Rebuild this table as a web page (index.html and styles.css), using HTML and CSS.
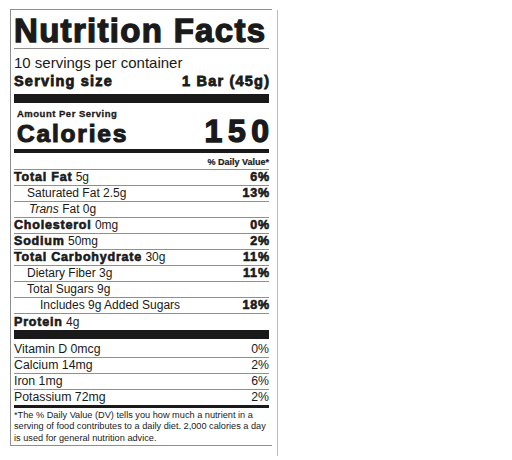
FILE: index.html
```html
<!DOCTYPE html>
<html lang="en">

<head>
  <meta charset="UTF-8">
  <meta name="viewport" content="width=device-width, initial-scale=1.0">
  <title>Nutrition Facts</title>
  <link rel="stylesheet" href="styles.css">
</head>

<body>
  <div class="sheet">
    <!-- Label -->
    <div class="label">
      <h1 class="title">Nutrition Facts</h1>
      <p class="servings">10 servings per container</p>
      <p class="serving-size"><span>Serving size</span><span class="end">1 Bar (45g)</span></p>
      <div class="bar"></div>

      <!-- Calories -->
      <p class="amount">Amount Per Serving</p>
      <div class="calories">
        <span class="cal-label">Calories</span>
        <span class="cal-value">150</span>
      </div>
      <div class="rule-medium"></div>
      <p class="dv-head">% Daily Value*</p>

      <!-- Nutrients -->
      <ul class="nutrients">
        <li><span><b>Total Fat</b> 5g</span><b class="end">6%</b></li>
        <li class="sub"><span>Saturated Fat 2.5g</span><b class="end">13%</b></li>
        <li class="sub trans"><span><i>Trans</i> Fat 0g</span></li>
        <li><span><b>Cholesterol</b> 0mg</span><b class="end">0%</b></li>
        <li><span><b>Sodium</b> 50mg</span><b class="end">2%</b></li>
        <li><span><b>Total Carbohydrate</b> 30g</span><b class="end">11%</b></li>
        <li class="sub"><span>Dietary Fiber 3g</span><b class="end">11%</b></li>
        <li class="sub"><span>Total Sugars 9g</span></li>
        <li class="sub-2"><span>Includes 9g Added Sugars</span><b class="end">18%</b></li>
        <li class="protein"><span><b>Protein</b> 4g</span></li>
      </ul>
      <div class="bar bar-flush"></div>

      <!-- Vitamins and minerals -->
      <ul class="vitamins">
        <li><span>Vitamin D 0mcg</span><span>0%</span></li>
        <li><span>Calcium 14mg</span><span>2%</span></li>
        <li><span>Iron 1mg</span><span>6%</span></li>
        <li><span>Potassium 72mg</span><span>2%</span></li>
      </ul>

      <p class="footnote">*The % Daily Value (DV) tells you how much a nutrient in a<br>serving of food contributes to a daily diet. 2,000 calories a day<br>is used for general nutrition advice.</p>
    </div>
    <div class="edge"></div>
  </div>
</body>

</html>
```

FILE: styles.css
```css
/* Base */
body {
  margin: 0;
  background: #fff;
  color: #1a1a1a;
  font-family: 'Liberation Sans', Arial, sans-serif;
}

.sheet {
  display: flex;
  align-items: flex-start;
}

/* Label box */
.label {
  width: 255px;
  margin: 9px 0 0 10px;
  padding: 0 3px 1px 3px;
  border: 1px solid #8f8f8f;
  border-right: none;
}

.edge {
  width: 1px;
  height: 446px;
  margin: 10px 0 0 5px;
  background: #d9a9d2;
}

.title {
  margin: 0;
  padding-top: 3px;
  font-size: 33px;
  line-height: 35px;
  font-weight: 700;
  letter-spacing: 1.3px;
  white-space: nowrap;
  -webkit-text-stroke: 1.3px #1a1a1a;
  border-bottom: 1px solid #8f8f8f;
}

.servings {
  margin: 0;
  padding-top: 5px;
  font-size: 15px;
  line-height: 18px;
}

.serving-size {
  margin: 0;
  display: flex;
  justify-content: space-between;
  font-size: 14.5px;
  line-height: 18px;
  font-weight: 700;
  letter-spacing: 1.2px;
  -webkit-text-stroke: 0.8px #1a1a1a;
}

.serving-size .end {
  margin-right: -1.2px;
}

.bar {
  height: 9px;
  margin-top: 4px;
  background: #1a1a1a;
}

.bar-flush {
  margin-top: 0;
}

/* Calories */
.amount {
  margin: 0;
  padding: 6px 0 0 3px;
  font-size: 9.5px;
  line-height: 10px;
  font-weight: 700;
  letter-spacing: 0.5px;
  -webkit-text-stroke: 0.3px #1a1a1a;
}

.calories {
  display: flex;
  justify-content: space-between;
  align-items: baseline;
  height: 30px;
  padding-left: 3px;
  font-weight: 700;
  line-height: 24px;
}

.cal-label {
  font-size: 24.5px;
  letter-spacing: 1.8px;
  -webkit-text-stroke: 1.1px #1a1a1a;
}

.cal-value {
  font-size: 32px;
  letter-spacing: 5.5px;
  margin-right: -5.5px;
  -webkit-text-stroke: 1.4px #1a1a1a;
}

.rule-medium {
  height: 4px;
  background: #1a1a1a;
}

.dv-head {
  margin: 0;
  padding-top: 3px;
  font-size: 9px;
  line-height: 13px;
  font-weight: 700;
  text-align: right;
  -webkit-text-stroke: 0.2px #1a1a1a;
  border-bottom: 1px solid #8f8f8f;
}

/* Nutrient rows */
.nutrients,
.vitamins {
  list-style: none;
  margin: 0;
  padding: 0;
}

.nutrients li,
.vitamins li {
  display: flex;
  justify-content: space-between;
  font-size: 12px;
  line-height: 15px;
  border-bottom: 1px solid #8f8f8f;
}

.nutrients b {
  font-size: 12.5px;
  letter-spacing: 0.8px;
  -webkit-text-stroke: 0.6px #1a1a1a;
}

.nutrients .end {
  margin-right: -0.8px;
}

.nutrients .sub {
  padding-left: 13px;
}

.nutrients .trans {
  padding-left: 15px;
}

.nutrients .sub-2 {
  padding-left: 26px;
}

.nutrients .protein {
  line-height: 16px;
  border-bottom: none;
}

/* Vitamins */
.vitamins li {
  font-size: 12.3px;
}

.vitamins li:first-child {
  padding-top: 3px;
}

.vitamins li:last-child {
  border-bottom: 3px solid #1a1a1a;
}

.footnote {
  margin: 0;
  padding-top: 2px;
  font-size: 9.2px;
  line-height: 11.3px;
  white-space: nowrap;
}
```
